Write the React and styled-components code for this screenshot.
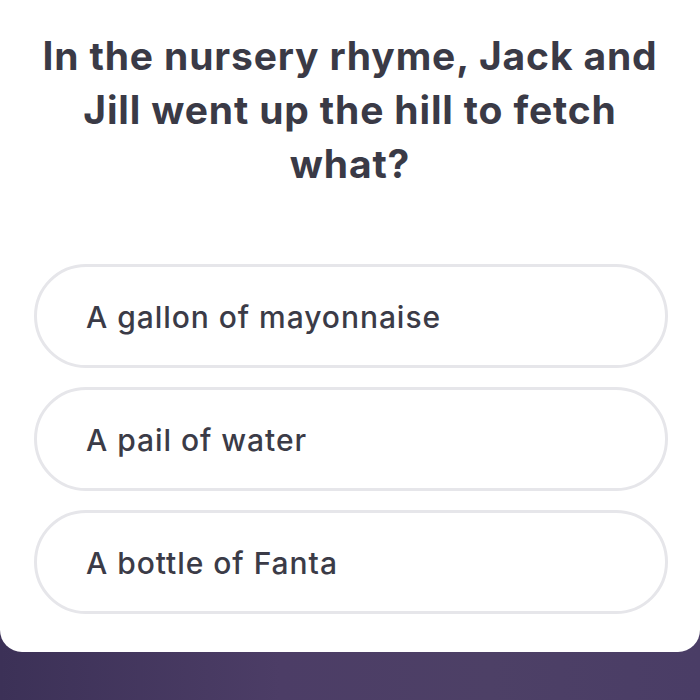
import React from "react";
import styled, { createGlobalStyle } from "styled-components";

const GlobalStyle = createGlobalStyle`
  html, body {
    margin: 0;
    padding: 0;
    background: #433559;
  }
  * { box-sizing: border-box; }
`;

const options = ["A gallon of mayonnaise", "A pail of water", "A bottle of Fanta"];

const App = () => {
  return (
    <>
      <GlobalStyle />
      <Screen>
        <Card>
          <Question>
            In the nursery rhyme, Jack and
            <br />
            Jill went up the hill to fetch
            <br />
            what?
          </Question>
          <OptionList>
            {options.map((o) => (
              <Option key={o}>{o}</Option>
            ))}
          </OptionList>
        </Card>
      </Screen>
    </>
  );
};

const Screen = styled.div`
  width: 700px;
  height: 700px;
  overflow: hidden;
  background: linear-gradient(90deg, #3c3157 0%, #4c3d66 40%, #4d4066 70%, #4a3d66 100%);
`;

const Card = styled.div`
  width: 700px;
  height: 652px;
  background: #ffffff;
  border-radius: 0 0 22px 22px;
  padding: 29px 32px 0 34px;
  display: flex;
  flex-direction: column;
  align-items: center;
`;

const Question = styled.h1`
  margin: 0 0 0 -2px;
  font-family: Inter, sans-serif;
  font-weight: 700;
  font-size: 39px;
  letter-spacing: 0.85px;
  line-height: 54px;
  color: #3a3a46;
  text-align: center;
  white-space: nowrap;
`;

const OptionList = styled.div`
  align-self: stretch;
  margin-top: 73px;
  display: flex;
  flex-direction: column;
  gap: 19px;
`;

const Option = styled.div`
  height: 104px;
  border: 3px solid #e6e6ea;
  border-radius: 52px;
  display: flex;
  align-items: center;
  padding: 2px 0 0 49px;
  font-family: Inter, sans-serif;
  font-weight: 500;
  font-size: 30px;
  letter-spacing: 0.95px;
  color: #3b3b47;
`;

export default App;
